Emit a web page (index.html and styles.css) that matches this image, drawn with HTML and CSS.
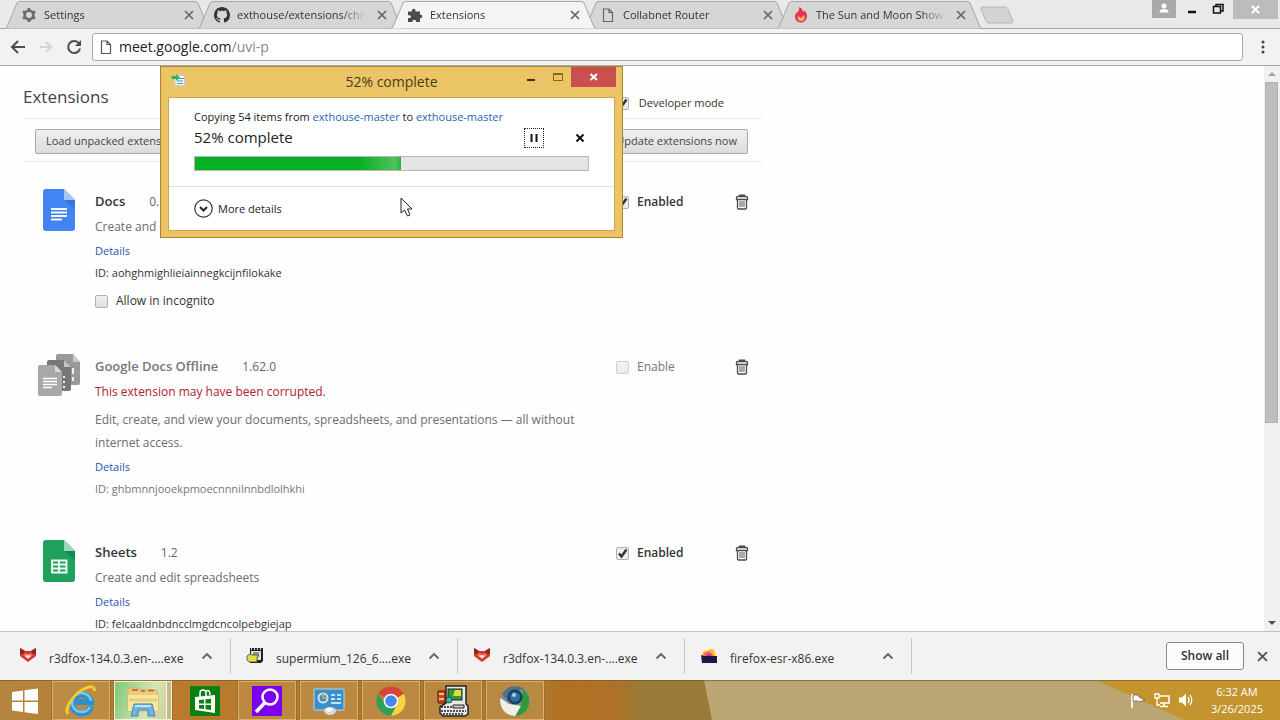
FILE: index.html
```html
<!DOCTYPE html>
<html lang="en">
<head>
<meta charset="utf-8">
<title>Extensions</title>
<link rel="stylesheet" href="styles.css">
</head>
<body>
<svg class="defs" aria-hidden="true">
  <defs>
    <symbol id="tab-shape" viewBox="0 0 205 29" preserveAspectRatio="none"><path d="M0 28.5 L2 27 L12 3 Q13 1.500 15 1.500 H190 Q192 1.500 193 3 L203 27 L205 28.500"/></symbol>
    <symbol id="x" viewBox="0 0 10 10"><path d="M1 1 L9 9 M9 1 L1 9" fill="none" stroke="currentColor" stroke-width="1.700"/></symbol>
    <symbol id="page" viewBox="0 0 16 16"><path d="M3.500 2 H9 L12.500 5.500 V14.500 H3.500 Z M9 2 V5.500 H12.500" fill="none" stroke="currentColor" stroke-width="1.200"/></symbol>
    <symbol id="chevron" viewBox="0 0 12 8"><path d="M1.500 6.500 L6 2 L10.500 6.500" fill="none" stroke="#666" stroke-width="1.900"/></symbol>
    <symbol id="trash" viewBox="0 0 14 16"><path d="M1.500 5.500 V3.500 Q1.500 2.500 3 2.500 H11 Q12.500 2.500 12.500 3.500 V5.500Z M4.500 2.500 V1.200 H9.500 V2.500 M2.500 5.500 V14 Q2.500 15 3.500 15 H10.500 Q11.500 15 11.500 14 V5.500" fill="none" stroke="#4a4a4a" stroke-width="1.300"/><path d="M5 7 V13 M7 7 V13 M9 7 V13" stroke="#555" stroke-width="1"/></symbol>
    <symbol id="fox" viewBox="0 0 18 16"><path d="M1 0 L6 3 H12 L17 0 L17 8 L9 14 L1 8 Z" fill="#d8362b"/><path d="M1 0 L6 3 L4 6 L1 6 Z" fill="#8e2626"/><path d="M17 0 L12 3 L14 6 L17 6 Z" fill="#8e2626"/><path d="M4 7 L7 5 L9 7 L11 5 L14 7 L9 11 Z" fill="#f27a68"/><path d="M6 8 L9 7 L12 8 L9 10.500 Z" fill="#fff0e8"/></symbol>
  </defs>
</svg>

<header class="tabstrip">
  <nav class="tabs" aria-label="Tabs">
    <div class="tab">
      <svg class="tab-bg"><use href="#tab-shape"/></svg>
      <svg class="icon" viewBox="0 0 16 16"><circle cx="8" cy="8" r="4.300" fill="none" stroke="#6b6b6b" stroke-width="2.600"/><path d="M8 1 V3.500 M8 12.500 V15 M2 4.500 L4 5.700 M12 10.300 L14 11.500 M2 11.500 L4 10.300 M12 5.700 L14 4.500" stroke="#6b6b6b" stroke-width="2.800"/></svg>
      <span class="tab-title">Settings</span>
      <button class="tab-close" aria-label="Close Settings"><svg><use href="#x"/></svg></button>
    </div>
    <div class="tab">
      <svg class="tab-bg"><use href="#tab-shape"/></svg>
      <svg class="icon" viewBox="0 0 16 16"><path fill="#333" d="M8 0C3.580 0 0 3.580 0 8c0 3.540 2.290 6.530 5.470 7.590.4.070.55-.17.55-.38 0-.19-.01-.82-.01-1.490-2.010.37-2.530-.49-2.690-.94-.09-.23-.48-.94-.82-1.130-.28-.15-.68-.52-.01-.53.63-.01 1.080.58 1.230.82.72 1.210 1.870.87 2.330.66.07-.52.28-.87.51-1.070-1.780-.2-3.640-.89-3.640-3.950 0-.87.31-1.590.82-2.150-.08-.2-.36-1.020.08-2.120 0 0 .67-.21 2.200.82.64-.18 1.320-.27 2-.27s1.360.09 2 .27c1.530-1.040 2.200-.82 2.200-.82.44 1.100.16 1.920.08 2.120.51.56.82 1.270.82 2.150 0 3.070-1.870 3.750-3.650 3.950.29.25.54.73.54 1.480 0 1.070-.01 1.930-.01 2.200 0 .21.150.46.55.38A8.010 8.010 0 0 0 16 8c0-4.420-3.580-8-8-8Z"/></svg>
      <span class="tab-title">exthouse/extensions/chrome</span>
      <button class="tab-close" aria-label="Close exthouse"><svg><use href="#x"/></svg></button>
    </div>
    <div class="tab active">
      <svg class="tab-bg"><use href="#tab-shape"/></svg>
      <svg class="icon" viewBox="0 0 16 16"><path d="M1 4.500 H5 C4 1.500 9 0.500 8.500 4.500 H13 V8 C16 7 16 12 13 11 V15 H9 C9.500 12 5 12 5.500 15 H1 V11 C5 12 5 7.500 1 8.500 Z" fill="#4b4b4b"/></svg>
      <span class="tab-title">Extensions</span>
      <button class="tab-close" aria-label="Close Extensions"><svg><use href="#x"/></svg></button>
    </div>
    <div class="tab">
      <svg class="tab-bg"><use href="#tab-shape"/></svg>
      <svg class="icon" color="#666"><use href="#page"/></svg>
      <span class="tab-title">Collabnet Router</span>
      <button class="tab-close" aria-label="Close Collabnet Router"><svg><use href="#x"/></svg></button>
    </div>
    <div class="tab">
      <svg class="tab-bg"><use href="#tab-shape"/></svg>
      <svg class="icon" viewBox="0 0 16 16"><path d="M6 0 C9 1 10 3 10 5 L11.500 3.500 C14 6 14.500 9 13.500 11.500 C12 16.500 4.500 17 2.500 12 C1 8.500 3 6 5 4.500 C6 3.500 6.500 2 6 0Z" fill="#e6334f"/><path d="M5 9 L8 11 L11 8 C12.500 12 10.500 14 8 14 C5 14 4 11.500 5 9Z" fill="#ffb27a"/></svg>
      <span class="tab-title">The Sun and Moon Show</span>
      <button class="tab-close" aria-label="Close The Sun and Moon"><svg><use href="#x"/></svg></button>
    </div>
    <button class="new-tab" aria-label="New tab"><svg viewBox="0 0 34 18"><path d="M1 3 Q0 1 3 1 H25 Q27 1 28 3 L33 15 Q33 17 31 17 H9 Q7 17 6 15 Z" fill="#d3d3d3" stroke="#b4b4b4"/></svg></button>
  </nav>
  <div class="window-buttons">
    <button class="profile" aria-label="Profile"><svg viewBox="0 0 24 18"><circle cx="12" cy="6" r="2.500" fill="#fff"/><path d="M7.500 12.500 Q7.500 9 12 9 T16.500 12.500Z" fill="#fff"/></svg></button>
    <button class="wbtn" aria-label="Minimize"><svg viewBox="0 0 26 18"><path d="M9 12 H17" stroke="#111" stroke-width="2.500"/></svg></button>
    <button class="wbtn" aria-label="Restore"><svg viewBox="0 0 26 18"><path d="M7.500 6.500 H14.500 V13 H7.500Z M10 6 V4.500 H17 V11 H15" fill="none" stroke="#111" stroke-width="1.500"/></svg></button>
    <button class="wclose" aria-label="Close"><svg viewBox="0 0 45 19"><path d="M19 6 L26 13 M26 6 L19 13" stroke="#fff" stroke-width="2"/></svg></button>
  </div>
</header>

<div class="toolbar">
  <button class="tool" aria-label="Back"><svg viewBox="0 0 16 16"><path d="M15 8 H2 M8 2 L2 8 L8 14" fill="none" stroke="#4d4d4d" stroke-width="2"/></svg></button>
  <button class="tool" aria-label="Forward" disabled><svg viewBox="0 0 16 16"><path d="M2 8 H13 M8 3 L13 8 L8 13" fill="none" stroke="#d4d4d4" stroke-width="2"/></svg></button>
  <button class="tool" aria-label="Reload"><svg viewBox="0 0 16 16"><path d="M13 4.500 A6 6 0 1 0 14 9.500" fill="none" stroke="#4d4d4d" stroke-width="2"/><path d="M15 1 V7 H9Z" fill="#4d4d4d"/></svg></button>
  <div class="omnibox">
    <svg class="icon" color="#555"><use href="#page"/></svg>
    <div class="url" role="textbox" aria-label="Address" contenteditable="true" spellcheck="false">meet.google.com<span class="path">/uvi-p</span></div>
  </div>
  <button class="tool menu" aria-label="Menu"><svg viewBox="0 0 16 16" fill="#444"><circle cx="8" cy="3" r="1.500"/><circle cx="8" cy="8" r="1.500"/><circle cx="8" cy="13" r="1.500"/></svg></button>
</div>

<div class="viewport">
  <main class="page">
    <div class="page-head">
      <h1>Extensions</h1>
      <label class="check"><input type="checkbox" checked>Developer mode</label>
    </div>
    <div class="dev-row">
      <button class="push">Load unpacked extension...</button>
      <button class="push last">Update extensions now</button>
    </div>
    <section class="list">
      <article class="ext">
        <svg class="ext-icon" viewBox="0 0 32 42"><path d="M3 0 H21 L32 11 V39 Q32 42 29 42 H3 Q0 42 0 39 V3 Q0 0 3 0Z" fill="#4384f3"/><path d="M21 0 L32 11 H21Z" fill="#a6c5fa"/><path d="M21 11 H32 V20Z" fill="#3a73dc"/><path d="M8 20 H24 M8 23.500 H24 M8 27 H24 M8 30.500 H19" stroke="#f4f8ff" stroke-width="1.800"/></svg>
        <div class="info">
          <h2>Docs<span class="version">0.10</span></h2>
          <p class="desc">Create and edit documents</p>
          <p class="details"><a href="#docs">Details</a></p>
          <p class="id">ID: <span>aohghmighlieiainnegkcijnfilokake</span></p>
          <label class="check incognito"><input type="checkbox">Allow in incognito</label>
        </div>
        <label class="check on"><input type="checkbox" checked>Enabled</label>
        <button class="remove" aria-label="Remove Docs"><svg><use href="#trash"/></svg></button>
      </article>
      <article class="ext off">
        <svg class="ext-icon wide" viewBox="0 0 43 43"><path d="M20 0 H35 L42 8 V29 Q42 31 40 31 H20 Q18 31 18 29 V2 Q18 0 20 0Z" fill="#9a9a9a"/><path d="M35 0 L42 8 H35Z" fill="#c9c9c9"/><path d="M11 6 H26 L33 13 V35 Q33 37 31 37 H11 Q9 37 9 35 V8 Q9 6 11 6Z" fill="#777"/><path d="M26 6 L33 13 H26Z" fill="#c2c2c2"/><path d="M35 14 V20 M35 23 V27" stroke="#f0f0f0" stroke-width="2"/><path d="M2 11 H17 L24 18 V40 Q24 42 22 42 H2 Q0 42 0 40 V13 Q0 11 2 11Z" fill="#a8a8a8"/><path d="M17 11 L24 18 H17Z" fill="#d8d8d8"/><path d="M5 24.500 H19 M5 27.500 H19 M5 30.500 H19 M5 33.500 H14" stroke="#fff" stroke-width="1.500"/><path d="M25 23 H27 M25 28 H27 M25 33 H27" stroke="#eee" stroke-width="2"/></svg>
        <div class="info">
          <h2>Google Docs Offline<span class="version">1.62.0</span></h2>
          <p class="warning">This extension may have been corrupted.</p>
          <p class="desc">Edit, create, and view your documents, spreadsheets, and presentations — all without internet access.</p>
          <p class="details"><a href="#offline">Details</a></p>
          <p class="id">ID: <span>ghbmnnjooekpmoecnnnilnnbdlolhkhi</span></p>
        </div>
        <label class="check on"><input type="checkbox" disabled>Enable</label>
        <button class="remove" aria-label="Remove Google Docs Offline"><svg><use href="#trash"/></svg></button>
      </article>
      <article class="ext">
        <svg class="ext-icon" viewBox="0 0 32 42"><path d="M3 0 H21 L32 11 V39 Q32 42 29 42 H3 Q0 42 0 39 V3 Q0 0 3 0Z" fill="#1fa05c"/><path d="M21 0 L32 11 H21Z" fill="#9bd5b7"/><path d="M21 11 H32 V20Z" fill="#168a4e"/><path d="M9 20.500 H23.500 V32.500 H9Z M9 24.500 H23.500 M9 28.500 H23.500 M16 20.500 V32.500" fill="none" stroke="#f1faf4" stroke-width="1.900"/></svg>
        <div class="info">
          <h2>Sheets<span class="version">1.2</span></h2>
          <p class="desc">Create and edit spreadsheets</p>
          <p class="details"><a href="#sheets">Details</a></p>
          <p class="id">ID: <span>felcaaldnbdncclmgdcncolpebgiejap</span></p>
        </div>
        <label class="check on"><input type="checkbox" checked>Enabled</label>
        <button class="remove" aria-label="Remove Sheets"><svg><use href="#trash"/></svg></button>
      </article>
    </section>
  </main>
  <div class="scrollbar">
    <svg viewBox="0 0 16 16"><path d="M4 10 L8 6 L12 10Z" fill="#a3a3a3"/></svg>
    <div class="track"><div class="thumb"></div></div>
    <svg viewBox="0 0 16 16"><path d="M4 6 L8 10 L12 6Z" fill="#505050"/></svg>
  </div>
</div>

<section class="downloads" aria-label="Downloads">
  <div class="dl"><svg class="dl-icon"><use href="#fox"/></svg><span>r3dfox-134.0.3.en-....exe</span><button aria-label="Options"><svg><use href="#chevron"/></svg></button></div>
  <div class="dl"><svg class="dl-icon" viewBox="0 0 18 16"><path d="M4 0 H17 V13 L15 15 H4Z" fill="#222"/><path d="M5 3 H15 V12 H5Z" fill="#dedede"/><path d="M5 1 H6 M8 1 H9 M11 1 H12 M14 1 H15" stroke="#fff" stroke-width="1.500"/><path d="M7 5 H13 M7 7 H13" stroke="#444" stroke-width="1"/><path d="M1 8 L4 6 L6 7 H12 V9 H11 V14 H3 L1 12Z" fill="#e0dc48" stroke="#333" stroke-width=".7"/></svg><span>supermium_126_6....exe</span><button aria-label="Options"><svg><use href="#chevron"/></svg></button></div>
  <div class="dl"><svg class="dl-icon"><use href="#fox"/></svg><span>r3dfox-134.0.3.en-....exe</span><button aria-label="Options"><svg><use href="#chevron"/></svg></button></div>
  <div class="dl"><svg class="dl-icon" viewBox="0 0 18 16"><path d="M2 8 C2 3 5 2 8 3 C9 0 14 0 15 4 L16 9Z" fill="#ffc22e"/><path d="M3 9 C3 3 9 2 12 5 L14 9Z" fill="#ff7436"/><path d="M6 9 C6 4 11 4 12 9Z" fill="#c03bb4"/><path d="M1 7 L4 8 H17 V15 H2Z" fill="#211747"/></svg><span>firefox-esr-x86.exe</span><button aria-label="Options"><svg><use href="#chevron"/></svg></button></div>
  <button class="show-all">Show all</button>
  <button class="dl-close" aria-label="Close downloads"><svg><use href="#x"/></svg></button>
</section>

<footer class="taskbar">
  <svg class="wallpaper" viewBox="0 0 1280 40" preserveAspectRatio="none">
    <defs><linearGradient id="wood"><stop offset="0" stop-color="#b5853f"/><stop offset=".14" stop-color="#b97a2e"/><stop offset=".42" stop-color="#b0792f"/><stop offset=".44" stop-color="#b27022"/><stop offset=".48" stop-color="#ae7126"/><stop offset=".5" stop-color="#9a7a38"/><stop offset="1" stop-color="#9a7a38"/></linearGradient></defs>
    <rect width="1280" height="40" fill="url(#wood)"/><path d="M704 0 H1100 L1190 40 H712Z" fill="#bca674"/><path d="M1096 0 H1280 V40 H1184Z" fill="#c4942f"/><rect width="1280" height="1" fill="#6b5323" opacity=".6"/>
  </svg>
  <nav class="apps" aria-label="Taskbar">
    <button class="start" aria-label="Start"><svg viewBox="0 0 28 26"><path d="M1 4 L12 2.500 V12.500 H1Z M13.500 2.300 L27 0.500 V12.500 H13.500Z M1 14 H12 V24 L1 22.500Z M13.500 14 H27 V26 L13.500 24.200Z" fill="#fff"/></svg></button>
    <button class="app framed" aria-label="Internet Explorer"><svg viewBox="0 0 32 32"><path d="M26 21 A9.500 9.500 0 1 1 26 17 H11" fill="none" stroke="#2b8fd0" stroke-width="6"/><path d="M25 22 A9.500 9.500 0 1 1 26 16" fill="none" stroke="#6fccf4" stroke-width="2.500"/><path d="M3 29 C-1 24 8 10 17 5 C24 1 30 0 29.500 6" fill="none" stroke="#f7ca32" stroke-width="3"/></svg></button>
    <button class="app framed current" aria-label="File Explorer"><svg viewBox="0 0 32 32"><path d="M1 5 L3 3 H11 L13 5 H29 L31 8 V26 H1Z" fill="#e7cf7a" stroke="#d0b55e"/><path d="M5 5 H11 M14 6 H18 M21 5.500 H27" stroke="#d4493c" stroke-width="1.500"/><path d="M1 10 H31 V26 H1Z" fill="#f6e6a4"/><path d="M2 15 H30" stroke="#eacf76" stroke-width="3"/><path d="M4 31 L7 19 H25 L28 31 H21 V25 H11 V31Z" fill="#72b4df" stroke="#3c84b9"/><path d="M8 21 H24" stroke="#c3e5f7" stroke-width="2"/></svg></button>
    <button class="app" aria-label="Store"><svg viewBox="0 0 32 32"><rect x="1" y="1" width="30" height="30" fill="#0b8011"/><path d="M6 12 L26 10 V28 L6 25Z" fill="#fff"/><path d="M11 12 V8 Q11 5 14 5 T17 8 V11 M17 6 Q21 4 21 10" fill="none" stroke="#fff" stroke-width="1.500"/><path d="M10 15 L15 14.500 V18.500 H10Z M16.500 14.300 L22 13.800 V18.500 H16.500Z M10 20 H15 V24 L10 23.500Z M16.500 20 H22 V25 L16.500 24.300Z" fill="#0b8011"/></svg></button>
    <button class="app framed" aria-label="Search"><svg viewBox="0 0 32 32"><rect x="1" y="1" width="30" height="30" fill="#7a00ef"/><circle cx="19" cy="12" r="7.500" fill="none" stroke="#fff" stroke-width="2.500"/><path d="M13.500 18 L5 27" stroke="#fff" stroke-width="3.500"/></svg></button>
    <button class="app framed" aria-label="Control Panel"><svg viewBox="0 0 32 32"><rect x="1" y="4" width="30" height="21" rx="1" fill="#3b8dcb" stroke="#a9dcf5"/><circle cx="10" cy="13" r="4.500" fill="none" stroke="#c5e6f5" stroke-width="2"/><path d="M10 7 V13 H14" fill="none" stroke="#f1a444" stroke-width="1.500"/><path d="M18 10 H22 M24 10 H28 M18 14 H22 M24 14 H28 M18 18 H28" stroke="#bfe5f8" stroke-width="2"/><ellipse cx="17" cy="26" rx="6" ry="4" fill="#d5dce1"/><ellipse cx="16" cy="24.500" rx="3" ry="2" fill="#fff"/></svg></button>
    <button class="app framed" aria-label="Chrome"><svg viewBox="0 0 32 32"><path d="M16 16 L3.300 8.700 A14.700 14.700 0 0 1 28.700 8.700 Z" fill="#db4437"/><path d="M16 16 L28.700 8.700 A14.700 14.700 0 0 1 16 30.700 Z" fill="#fdd13f"/><path d="M28.700 8.700 H16 V16Z" fill="#db4437"/><path d="M22 19.500 L16 30.700 A14.700 14.700 0 0 1 3.300 8.700 L10 19.500Z" fill="#2da05a"/><circle cx="16" cy="16" r="7.300" fill="#fff"/><circle cx="16" cy="16" r="5.800" fill="#4688f4"/></svg></button>
    <button class="app framed" aria-label="Setup"><svg viewBox="0 0 32 32"><path d="M9 1 H29 V19 L31 21 V29 L28 31 H6 L3 28 V22 L9 18Z" fill="#e9e9e9" stroke="#222" stroke-width="1.500"/><rect x="11" y="4" width="14" height="11" fill="#2c9b3e" stroke="#222"/><path d="M18 5 H24 V11 H16Z" fill="#ead83c"/><path d="M4 22 H15 M4 26 H29 M6 29 H27" stroke="#222" stroke-width="1.500" stroke-dasharray="2 1"/><path d="M1 6 H8 V18 H1Z" fill="#d64125" stroke="#5c1c10"/><path d="M2 9 H7 M2 14 H7" stroke="#f3cd58" stroke-width="2"/><circle cx="12" cy="15" r="3" fill="#35b7ae" stroke="#155"/><path d="M16 20 H27 V23 H16Z" fill="#ccc" stroke="#222"/></svg></button>
    <button class="app framed" aria-label="Supermium"><svg viewBox="0 0 32 32"><circle cx="16" cy="16" r="15" fill="#7d939c"/><path d="M24 4 A15 15 0 0 1 17 31 L22 18Z" fill="#2f9a3b"/><path d="M1.500 13 L10 19 L22 21 L16 31 A15 15 0 0 1 1.500 13Z" fill="#efefe6"/><path d="M3 9 A15 15 0 0 1 25 4 L15 7 L9 17Z" fill="#527181"/><circle cx="16" cy="12" r="7.500" fill="#1a3f66"/><circle cx="16" cy="12" r="5" fill="#326f9f"/><circle cx="15" cy="10" r="2" fill="#a6d2ed"/></svg></button>
  </nav>
  <div class="tray">
    <svg viewBox="0 0 18 18"><path d="M3 3 V17" stroke="#fff" stroke-width="1.700"/><path d="M4 4 H9 L10 6 L16 9 L10 11 L9 10 H4Z" fill="#fff" stroke="#4b3c19" stroke-width=".6"/></svg>
    <svg viewBox="0 0 18 18"><path d="M6 5 H16 V12 H7 M11 12 V15 M7 15.500 H15" fill="none" stroke="#fff" stroke-width="1.600"/><path d="M2 3 H6 V7 H2Z M4 7 V14 H7" fill="none" stroke="#fff" stroke-width="1.300"/></svg>
    <svg viewBox="0 0 18 18"><path d="M2 6.500 H5 L9 2.500 V15.500 L5 11.500 H2Z" fill="#fff"/><path d="M11 6 Q13 9 11 12 M13 4 Q16.500 9 13 14" fill="none" stroke="#fff" stroke-width="1.300"/></svg>
    <div class="clock"><span>6:32 AM</span><span>3/26/2025</span></div>
  </div>
</footer>

<div class="dialog" role="dialog" aria-label="52% complete">
  <div class="titlebar">
    <svg class="copy" viewBox="0 0 16 16"><path d="M5 3.500 H14.500 V13.500 H5Z" fill="#f4f8fb" stroke="#c3d0d6"/><path d="M6 6.500 H14 M7 9 H13 M7 11.500 H13" stroke="#4e93c4"/><path d="M1 4 H6 V2 L10 5.500 L6 9 V7 H2Z" fill="#2fb45a"/></svg>
    <span class="dialog-title">52% complete</span>
    <button class="d-btn" aria-label="Minimize"><svg viewBox="0 0 27 20"><path d="M10 13 H18" stroke="#40310d" stroke-width="2"/></svg></button>
    <button class="d-btn" aria-label="Maximize"><svg viewBox="0 0 27 20"><path d="M9.500 6.500 H18.500 V13.500 H9.500Z M9 7.500 H19" fill="none" stroke="#846323"/></svg></button>
    <button class="d-close" aria-label="Close"><svg viewBox="0 0 45 20"><path d="M19.500 7 L26 13 M26 7 L19.500 13" stroke="#fff" stroke-width="2"/></svg></button>
  </div>
  <div class="client">
    <div class="copying">
      <p class="from">Copying 54 items from <a href="#source">exthouse-master</a> to <a href="#target">exthouse-master</a></p>
      <div class="status">
        <span>52% complete</span>
        <button class="pause" aria-label="Pause"><svg viewBox="0 0 18 18"><path d="M6.500 5 V13 M11.500 5 V13" stroke="#111" stroke-width="2"/></svg></button>
        <button class="cancel" aria-label="Cancel"><svg viewBox="0 0 18 18"><path d="M5.500 5.500 L12.500 12.500 M12.500 5.500 L5.500 12.500" stroke="#111" stroke-width="2"/></svg></button>
      </div>
      <div class="bar" role="progressbar" aria-label="Copy progress" aria-valuenow="52"><div class="fill" style="width:52.5%"></div></div>
    </div>
    <button class="more"><svg viewBox="0 0 19 19"><circle cx="9.500" cy="9.500" r="8.700" fill="#fff" stroke="#333" stroke-width="1.200"/><path d="M6 8 L9.500 11.500 L13 8" fill="none" stroke="#222" stroke-width="2"/></svg>More details</button>
  </div>
</div>
<svg class="cursor" viewBox="0 0 13 20" aria-hidden="true"><path d="M1 1 V16 L4.500 13 L7.500 19 L10 18 L7.500 12 H12Z" fill="#fff" stroke="#222"/></svg>
</body>
</html>
```
FILE: styles.css
```css
* { box-sizing: border-box; }

body {
  margin: 0;
  height: 100vh;
  display: flex;
  flex-direction: column;
  overflow: hidden;
  background: #fefefe;
  color: #333;
  font: 12px/16px "Open Sans", "Noto Sans", sans-serif;
}

button {
  margin: 0;
  padding: 0;
  border: 0;
  background: none;
  color: inherit;
  font: inherit;
}

button svg { display: block; }
h1, h2, p { margin: 0; font-weight: 400; }
a { color: #2a55b5; text-decoration: none; }
.defs { position: absolute; width: 0; height: 0; }
.icon { width: 16px; height: 16px; flex: none; }

/* Tab strip */
.tabstrip {
  display: flex;
  justify-content: space-between;
  flex: none;
  height: 29px;
  background: #e9e9e9;
  border-bottom: 1px solid #a6a6a6;
}
.tabs { display: flex; padding-left: 5px; }
.tab {
  position: relative;
  display: flex;
  align-items: center;
  gap: 7px;
  width: 205px;
  height: 29px;
  margin-right: -12px;
  padding: 1px 16px 0;
  isolation: isolate;
  font-size: 11px;
}
.tab-bg {
  position: absolute;
  inset: 0;
  z-index: -1;
  width: 100%;
  height: 100%;
  fill: #d6d6d6;
  stroke: #a6a6a6;
}
.active { z-index: 1; }
.active .tab-bg { fill: #f4f4f4; }
.tab-title {
  flex: 1;
  overflow: hidden;
  white-space: nowrap;
  mask-image: linear-gradient(to right, #000 104px, transparent 130px);
}
.tab-close { color: #666; }
.tab-close svg { width: 10px; height: 10px; }
.new-tab { margin: 6px 0 0 10px; height: 18px; }
.new-tab svg { width: 34px; height: 18px; }
.window-buttons { display: flex; align-items: flex-start; gap: 1px; padding-right: 2px; }
.profile { width: 24px; height: 18px; margin-right: 2px; background: #a9a9a9; }
.wbtn { width: 26px; height: 18px; }
.wclose { width: 45px; height: 19px; background: #bcbcbc; }

/* Toolbar */
.toolbar {
  display: flex;
  align-items: center;
  gap: 12px;
  flex: none;
  height: 37px;
  padding: 0 10px;
  background: #f2f2f2;
  border-bottom: 1px solid #a9a9a9;
}
.tool svg { width: 16px; height: 16px; }
.omnibox {
  display: flex;
  align-items: center;
  gap: 5px;
  flex: 1;
  height: 28px;
  margin-left: -2px;
  padding: 0 5px;
  background: #fff;
  border: 1px solid #a9a9a9;
  border-radius: 3px;
}
.url { flex: 1; font-size: 14px; line-height: 20px; color: #222; outline: 0; }
.path { color: #888; }
.menu { margin-right: -1px; }

/* Extensions page */
.viewport { display: flex; flex: 1; min-height: 0; overflow: hidden; }
.page { flex: 1; min-width: 0; padding-left: 23px; }
.page-head, .dev-row, .list { max-width: 739px; }
.page-head {
  display: flex;
  justify-content: space-between;
  height: 53px;
  padding: 20px 38px 0 0;
  border-bottom: 1px solid #e8e8e8;
}
h1 { font-size: 17px; line-height: 22px; color: #444; }
.check { display: flex; align-items: center; gap: 8px; height: 24px; }
.page-head .check { gap: 10px; margin-top: 5px; font-size: 11px; }
.check input {
  appearance: none;
  width: 13px;
  height: 13px;
  margin: 0;
  border: 1px solid #b0b0b0;
  border-radius: 2px;
  background: linear-gradient(#f0f0f0, #dedede);
}
.check input:checked {
  background: url("data:image/svg+xml,%3Csvg xmlns='http://www.w3.org/2000/svg' viewBox='0 0 11 11'%3E%3Cpath d='M2 5.500L4.500 8.500L9.500 1.500' fill='none' stroke='%23333' stroke-width='2.400'/%3E%3C/svg%3E"), #ececec;
}
.check input:disabled { opacity: .6; }
.dev-row {
  display: flex;
  align-items: center;
  justify-content: space-between;
  height: 43px;
  padding: 2px 14px 0 12px;
  border-bottom: 1px solid #e8e8e8;
}
.push {
  height: 25px;
  padding: 0 10px;
  border: 1px solid #aaa;
  border-radius: 2px;
  background: linear-gradient(#efefef, #dcdcdc);
  color: #444;
  font-size: 11px;
}
.list { display: flex; flex-direction: column; gap: 41px; padding-top: 27px; }
.ext { display: grid; grid-template-columns: 72px 521px 119px 14px; align-items: start; }
.ext-icon { width: 32px; height: 42px; margin-left: 20px; }
.ext-icon.wide { width: 43px; height: 43px; margin-left: 15px; }
h2 { font-size: 13px; line-height: 24px; font-weight: 600; }
.version { margin-left: 24px; font-size: 12px; font-weight: 400; color: #666; }
.warning { margin-bottom: 2px; line-height: 26px; color: #b3202f; }
.desc { max-width: 500px; padding: 1px 0; line-height: 23px; color: #6c6c6c; }
.details { font-size: 11px; line-height: 24px; }
.id { font-size: 11px; line-height: 20px; }
.incognito { margin-top: 6px; }
.on { height: 26px; font-weight: 600; }
.off h2, .off .id, .off .on { color: #777; }
.off .on { font-weight: 400; }
.remove { padding-top: 5px; }
.remove svg { width: 14px; height: 16px; }
.scrollbar { display: flex; flex-direction: column; flex: none; width: 16px; background: #f1f1f1; }
.scrollbar svg { width: 16px; height: 16px; }
.track { flex: 1; padding: 0 2px 0 1px; }
.thumb { height: 64%; background: #bebebe; border: 1px solid #b0b0b0; }

/* Downloads shelf */
.downloads {
  display: flex;
  align-items: center;
  flex: none;
  height: 49px;
  padding: 0 12px 0 4px;
  background: #f2f2f2;
  border-top: 1px solid #c4c4c4;
}
.dl {
  display: flex;
  align-items: center;
  width: 227px;
  height: 36px;
  padding: 0 17px 0 15px;
  border-right: 1px solid #c6c6c6;
}
.dl-icon { width: 18px; height: 16px; margin-right: 12px; }
.dl span { flex: 1; padding-top: 5px; }
.dl button svg { width: 12px; height: 8px; }
.show-all {
  width: 78px;
  height: 28px;
  margin-left: auto;
  border: 1px solid #888;
  border-radius: 3px;
  background: #fcfcfc;
  font-weight: 600;
}
.dl-close { margin-left: 13px; color: #555; }
.dl-close svg { width: 11px; height: 11px; }

/* Taskbar */
.taskbar {
  position: relative;
  display: flex;
  justify-content: space-between;
  flex: none;
  height: 40px;
  isolation: isolate;
}
.wallpaper { position: absolute; inset: 0; z-index: -1; width: 100%; height: 100%; }
.apps { display: flex; gap: 4px; padding-top: 1px; }
.start { width: 48px; padding-left: 11px; }
.start svg { width: 28px; height: 26px; }
.app { display: grid; place-items: center; width: 58px; border: 1px solid transparent; }
.app svg { width: 32px; height: 32px; }
.framed { background: #c2965088; border-color: #dcb066; outline: 1px solid #97712f; }
.current {
  background: linear-gradient(110deg, #7cc878, #d7e4b4 60%, #c9cb9b);
  border-color: #f6f2d8;
  box-shadow: inset -4px 0 #c5b989, inset -5px 0 #faf6df;
}
.tray { display: flex; align-items: center; gap: 6px; padding-right: 17px; }
.tray svg { width: 18px; height: 18px; }
.clock {
  display: flex;
  flex-direction: column;
  align-items: center;
  margin-left: 10px;
  color: #fff;
  font-size: 11px;
  line-height: 17px;
}

/* Copy dialog */
.dialog {
  position: absolute;
  top: 66px;
  left: 160px;
  z-index: 2;
  width: 463px;
  padding: 0 7px 6px;
  border: 1px solid #ad8332;
  background: #ebc565;
  color: #222;
}
.titlebar { display: flex; align-items: flex-start; height: 30px; margin-right: -1px; }
.copy { width: 16px; height: 16px; margin: 5px 0 0 2px; }
.dialog-title {
  flex: 1;
  padding: 4px 0 0 80px;
  text-align: center;
  font-size: 14px;
  line-height: 22px;
  color: #4a3b16;
}
.d-btn { width: 27px; height: 20px; }
.d-close { width: 45px; height: 20px; background: #c9504f; }
.client { border: 1px solid #caa551; background: #fff; }
.copying { height: 89px; padding: 10px 25px 0; border-bottom: 1px solid #dfdfdf; }
.from { font-size: 11px; line-height: 18px; }
.dialog a { color: #1f66b5; }
.status { display: flex; align-items: center; height: 24px; font-size: 15px; }
.status span { flex: 1; padding-bottom: 2px; }
.status svg { width: 18px; height: 18px; }
.pause { margin-right: 28px; outline: 1px dotted #222; }
.bar { height: 15px; margin-top: 6px; border: 1px solid #b8b8b8; background: #e4e4e4; }
.fill { height: 100%; background: linear-gradient(to right, #06b025 80%, #4fc25d 97%, #1fb63a); }
.more { display: flex; align-items: center; gap: 5px; height: 43px; margin-left: 25px; font-size: 11px; }
.more svg { width: 19px; height: 19px; }
.cursor { position: absolute; top: 197px; left: 400px; z-index: 3; width: 13px; height: 20px; }
```
